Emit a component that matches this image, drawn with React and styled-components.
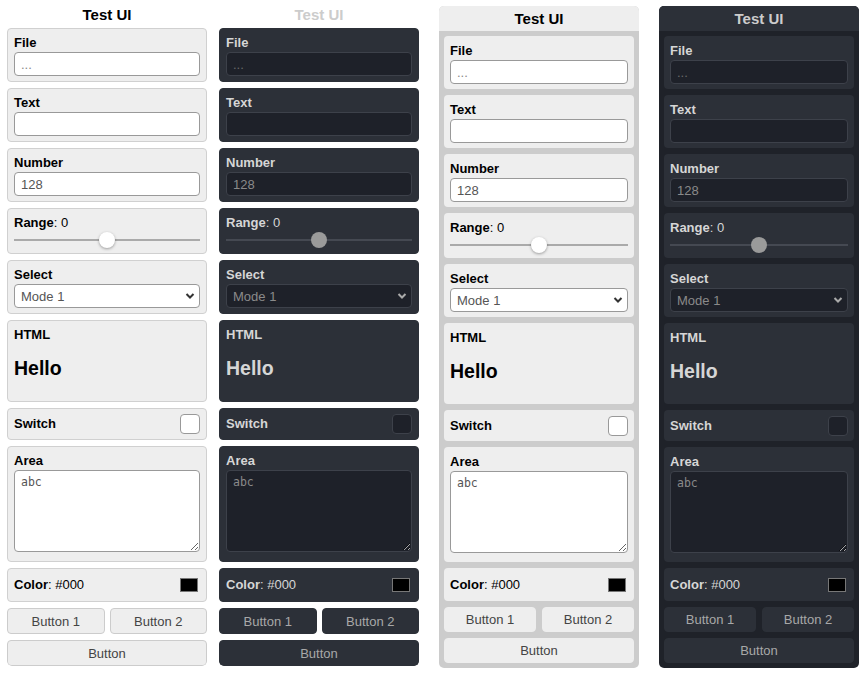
import React from "react";
import styled, { createGlobalStyle, ThemeProvider } from "styled-components";

// Two colour sets, each column picks one
const light = {
  text: "#000",
  title: "#000",
  cardBg: "#eeeeee",
  cardBorder: "#d0d0d0",
  inputBg: "#ffffff",
  inputBorder: "#999999",
  inputText: "#555555",
  placeholder: "#888888",
  btnBg: "#eeeeee",
  btnBorder: "#cccccc",
  btnText: "#444444",
  track: "#aaaaaa",
  thumb: "#ffffff",
  thumbShadow: "0 1px 3px rgba(0, 0, 0, 0.35)",
  chevron: "#333333",
  frameBg: "#cccccc",
  titleBar: "#eeeeee",
};

const dark = {
  text: "#d6d6d6",
  title: "#cccccc",
  cardBg: "#2c3038",
  cardBorder: "#2c3038",
  inputBg: "#1e2129",
  inputBorder: "#3d414a",
  inputText: "#8a8a8a",
  placeholder: "#6a6a6a",
  btnBg: "#2c3038",
  btnBorder: "#2c3038",
  btnText: "#a8a8a8",
  track: "#454952",
  thumb: "#9a9a9a",
  thumbShadow: "none",
  chevron: "#aaaaaa",
  frameBg: "#1f2229",
  titleBar: "#2c3038",
};

const columns = [
  { theme: light, framed: false, gap: 12 },
  { theme: dark, framed: false, gap: 20 },
  { theme: light, framed: true, gap: 20 },
  { theme: dark, framed: true, gap: 0 },
];

const TestPanel = ({ framed }) => (
  <Column $framed={framed}>
    <Title $framed={framed}>Test UI</Title>
    <Stack $framed={framed}>
      <Card $framed={framed}>
        <Label>File</Label>
        <Field placeholder="..." readOnly />
      </Card>
      <Card $framed={framed}>
        <Label>Text</Label>
        <Field defaultValue="" />
      </Card>
      <Card $framed={framed}>
        <Label>Number</Label>
        <Field defaultValue="128" />
      </Card>
      <Card $framed={framed}>
        <Label>
          Range<Plain>: 0</Plain>
        </Label>
        <Slider type="range" min="-100" max="100" defaultValue="0" />
      </Card>
      <Card $framed={framed}>
        <Label>Select</Label>
        <SelectWrap>
          <Select defaultValue="1">
            <option value="1">Mode 1</option>
            <option value="2">Mode 2</option>
          </Select>
          <Chevron width="10" height="8" viewBox="0 0 10 8">
            <polyline points="1.5,2 5,5.5 8.5,2" />
          </Chevron>
        </SelectWrap>
      </Card>
      <Card $framed={framed}>
        <Label>HTML</Label>
        <Hello>Hello</Hello>
      </Card>
      <Card $framed={framed} $row>
        <RowLabel>Switch</RowLabel>
        <Check type="checkbox" />
      </Card>
      <Card $framed={framed}>
        <Label>Area</Label>
        <Area defaultValue="abc" />
      </Card>
      <Card $framed={framed} $row>
        <RowLabel $tall>
          Color<Plain>: #000</Plain>
        </RowLabel>
        <Swatch />
      </Card>
      <ButtonRow $framed={framed}>
        <Button $framed={framed}>Button 1</Button>
        <Button $framed={framed}>Button 2</Button>
      </ButtonRow>
      <Button $framed={framed}>Button</Button>
    </Stack>
  </Column>
);

const App = () => (
  <>
    <GlobalStyle />
    <Page>
      {columns.map((col, i) => (
        <ThemeProvider theme={col.theme} key={i}>
          <Slot $gap={col.gap}>
            <TestPanel framed={col.framed} />
          </Slot>
        </ThemeProvider>
      ))}
    </Page>
  </>
);

const GlobalStyle = createGlobalStyle`
  body {
    margin: 0;
    background: #ffffff;
    font-family: "Liberation Sans", Arial, sans-serif;
  }
  * { box-sizing: border-box; }
`;

const Page = styled.div`
  display: flex;
  align-items: flex-start;
  padding-left: 7px;
`;

const Slot = styled.div`
  margin-right: ${(p) => p.$gap}px;
`;

const Column = styled.div`
  width: 200px;
  margin-top: ${(p) => (p.$framed ? "6px" : "0")};
  background: ${(p) => (p.$framed ? p.theme.frameBg : "transparent")};
  border-radius: 5px;
  overflow: hidden;
`;

const Title = styled.div`
  text-align: center;
  font-size: 15px;
  font-weight: bold;
  color: ${(p) => p.theme.title};
  background: ${(p) => (p.$framed ? p.theme.titleBar : "transparent")};
  line-height: ${(p) => (p.$framed ? "25px" : "22px")};
  padding: ${(p) => (p.$framed ? "0" : "4px 0 2px")};
`;

const Stack = styled.div`
  display: flex;
  flex-direction: column;
  gap: 6px;
  padding: ${(p) => (p.$framed ? "5px 5px 5px" : "0")};
`;

const Card = styled.div`
  background: ${(p) => p.theme.cardBg};
  border: ${(p) => (p.$framed ? "0" : `1px solid ${p.theme.cardBorder}`)};
  border-radius: 4px;
  padding: ${(p) => (p.$framed ? "6px 6px 5px" : "5px 6px")};
  display: ${(p) => (p.$row ? "flex" : "block")};
  align-items: center;
  justify-content: space-between;
`;

const Label = styled.div`
  font-size: 13px;
  font-weight: bold;
  line-height: 18px;
  color: ${(p) => p.theme.text};
`;

const RowLabel = styled(Label)`
  line-height: ${(p) => (p.$tall ? "22px" : "20px")};
`;

const Plain = styled.span`
  font-weight: normal;
`;

const Field = styled.input`
  display: block;
  width: 100%;
  height: 24px;
  margin: 0;
  padding: 0 6px;
  border: 1px solid ${(p) => p.theme.inputBorder};
  border-radius: 4px;
  background: ${(p) => p.theme.inputBg};
  color: ${(p) => p.theme.inputText};
  font-family: "Liberation Sans", Arial, sans-serif;
  font-size: 13px;
  outline: none;

  &::placeholder {
    color: ${(p) => p.theme.placeholder};
  }
`;

const Slider = styled.input`
  display: block;
  width: 100%;
  height: 16px;
  margin: 0;
  background: transparent;
  -webkit-appearance: none;
  appearance: none;

  &::-webkit-slider-runnable-track {
    height: 2px;
    background: ${(p) => p.theme.track};
  }

  &::-webkit-slider-thumb {
    -webkit-appearance: none;
    width: 16px;
    height: 16px;
    margin-top: -7px;
    border-radius: 50%;
    background: ${(p) => p.theme.thumb};
    box-shadow: ${(p) => p.theme.thumbShadow};
  }
`;

const SelectWrap = styled.div`
  position: relative;
`;

const Select = styled.select`
  display: block;
  width: 100%;
  height: 24px;
  margin: 0;
  padding: 0 20px 0 6px;
  border: 1px solid ${(p) => p.theme.inputBorder};
  border-radius: 4px;
  background: ${(p) => p.theme.inputBg};
  color: ${(p) => p.theme.inputText};
  font-family: "Liberation Sans", Arial, sans-serif;
  font-size: 13px;
  -webkit-appearance: none;
  appearance: none;
  outline: none;
`;

const Chevron = styled.svg`
  position: absolute;
  right: 5px;
  top: 8px;
  fill: none;
  stroke: ${(p) => p.theme.chevron};
  stroke-width: 2;
  pointer-events: none;
`;

const Hello = styled.div`
  font-size: 19.5px;
  font-weight: bold;
  line-height: 24px;
  padding: 12px 0 16px;
  color: ${(p) => p.theme.text};
`;

const Check = styled.input`
  -webkit-appearance: none;
  appearance: none;
  width: 20px;
  height: 20px;
  margin: 0;
  border: 1px solid ${(p) => p.theme.inputBorder};
  border-radius: 4px;
  background: ${(p) => p.theme.inputBg};
`;

const Area = styled.textarea`
  display: block;
  width: 100%;
  height: 82px;
  margin: 0 0 4px;
  padding: 4px 6px;
  border: 1px solid ${(p) => p.theme.inputBorder};
  border-radius: 4px;
  background: ${(p) => p.theme.inputBg};
  color: ${(p) => p.theme.inputText};
  font-family: "DejaVu Sans Mono", "Liberation Mono", monospace;
  font-size: 11.5px;
  outline: none;
`;

const Swatch = styled.span`
  display: block;
  width: 18px;
  height: 14px;
  margin-right: 2px;
  background: #000;
  border: 1px solid #777;
`;

const ButtonRow = styled.div`
  display: grid;
  grid-template-columns: 1fr 1fr;
  gap: ${(p) => (p.$framed ? "6px" : "5px")};
`;

const Button = styled.button`
  height: ${(p) => (p.$framed ? "25px" : "26px")};
  margin: 0;
  padding: 0;
  border: 1px solid
    ${(p) => (p.$framed ? p.theme.btnBg : p.theme.btnBorder)};
  border-radius: 4px;
  background: ${(p) => p.theme.btnBg};
  color: ${(p) => p.theme.btnText};
  font-family: "Liberation Sans", Arial, sans-serif;
  font-size: 13px;
`;

export default App;
